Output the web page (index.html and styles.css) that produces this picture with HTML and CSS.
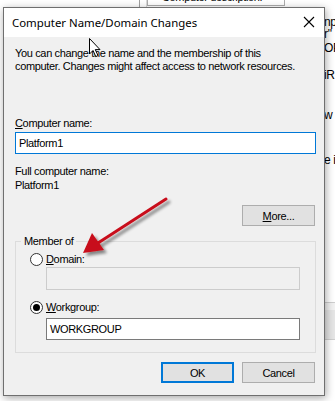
FILE: index.html
```html
<!DOCTYPE html>
<html lang="en">
<head>
  <meta charset="UTF-8" />
  <title>Computer Name/Domain Changes</title>
  <link rel="stylesheet" href="styles.css">
</head>
<body>

  <div class="behind">
    <div class="behind-top">
      <span class="rule dark"></span>
      <span class="rule"></span>
      <div class="desc-box">Computer description:</div>
    </div>
    <div class="behind-strip">
      <span class="frag f1">npl</span>
      <span class="frag f2">r"</span>
      <span class="frag f3">OP</span>
      <span class="frag f4">iR</span>
      <span class="frag f5">w</span>
      <span class="frag f6">e it</span>
      <span class="band"></span>
    </div>
  </div>

  <div class="dialog">
    <div class="titlebar">
      <span class="title">Computer Name/Domain Changes</span>
      <svg class="close" width="12" height="12" viewBox="0 0 12 12">
        <path d="M1 1 L11 11 M11 1 L1 11" stroke="#000" stroke-width="1.1" fill="none" />
      </svg>
    </div>

    <div class="content">
      <p class="intro">You can change the name and the membership of this<br>computer. Changes might affect access to network resources.</p>

      <div class="label"><u>C</u>omputer name:</div>
      <div class="textbox focused">Platform1</div>

      <div class="label full">Full computer name:</div>
      <div class="value">Platform1</div>

      <div class="more-row">
        <button class="btn"><u>M</u>ore...</button>
      </div>

      <fieldset class="group">
        <legend>Member of</legend>
        <div class="radio-row">
          <span class="radio"></span>
          <span><u>D</u>omain:</span>
        </div>
        <div class="textbox disabled"></div>
        <div class="radio-row second">
          <span class="radio checked"></span>
          <span><u>W</u>orkgroup:</span>
        </div>
        <div class="textbox">WORKGROUP</div>
      </fieldset>

      <div class="actions">
        <button class="btn default">OK</button>
        <button class="btn">Cancel</button>
      </div>
    </div>
  </div>

  <!-- annotation drawn over the screenshot -->
  <svg class="arrow" width="335" height="401" viewBox="0 0 335 401">
    <defs>
      <filter id="shade" x="-20%" y="-20%" width="140%" height="140%">
        <feGaussianBlur in="SourceAlpha" stdDeviation="1.6" />
        <feOffset dx="3" dy="3" result="blur" />
        <feComponentTransfer><feFuncA type="linear" slope="0.45" /></feComponentTransfer>
        <feMerge><feMergeNode /><feMergeNode in="SourceGraphic" /></feMerge>
      </filter>
    </defs>
    <g filter="url(#shade)">
      <line x1="166" y1="199" x2="98" y2="243" stroke="#c8101a" stroke-width="3" stroke-linecap="round" />
      <polygon points="83,253 92,233 104,250" fill="#c8101a" />
    </g>
  </svg>

  <svg class="cursor" width="13" height="20" viewBox="0 0 13 20">
    <path d="M0.5 0.5 L0.5 16 L4 12.5 L6.8 18.6 L9 17.6 L6.3 11.6 L11 11.6 Z" fill="#fff" stroke="#000" stroke-width="1" stroke-linejoin="round" />
  </svg>

</body>
</html>
```

FILE: styles.css
```css
body {
  margin: 0;
  width: 335px;
  height: 401px;
  overflow: hidden;
  position: relative;
  background: #fff;
  font-family: "Liberation Sans", Arial, sans-serif;
  font-size: 11px;
  letter-spacing: -0.35px;
  color: #000;
}
.behind {
  position: absolute;
  inset: 0;
  background: #fff;
}
.behind-top {
  position: relative;
  height: 7px;
}
.rule {
  position: absolute;
  top: 0;
  left: 146px;
  width: 1px;
  height: 7px;
  background: #dadada;
}
.rule.dark {
  left: 139px;
  background: #a0a0a0;
}
.desc-box {
  position: absolute;
  left: 147px;
  top: -9px;
  width: 138px;
  height: 15px;
  border: 1px solid #adadad;
  border-top: none;
  padding-left: 14px;
  box-sizing: border-box;
  line-height: 12px;
  white-space: nowrap;
  overflow: hidden;
}
.behind-strip {
  position: absolute;
  left: 325px;
  top: 0;
  width: 10px;
  height: 401px;
  overflow: hidden;
  font-size: 12px;
}
.frag {
  position: absolute;
  left: -1px;
  white-space: nowrap;
  line-height: 11px;
}
.f1 { top: 17px; }
.f2 { top: 29px; }
.f3 { top: 43px; }
.f4 { top: 70px; }
.f5 { top: 110px; }
.f6 { top: 155px; }
.band {
  position: absolute;
  left: 0;
  top: 302px;
  width: 10px;
  height: 38px;
  border-top: 1px solid #cfcfcf;
  border-bottom: 1px solid #cfcfcf;
  background: linear-gradient(#f2f2f2 0 7px, #e6e6e6 7px);
  box-sizing: border-box;
}

.dialog {
  position: absolute;
  left: 3px;
  top: 7px;
  width: 322px;
  height: 389px;
  box-sizing: border-box;
  border: 1px solid #6f6f6f;
  background: #f0f0f0;
  box-shadow: 1px 2px 8px rgba(0, 0, 0, 0.35);
}
.titlebar {
  height: 29px;
  background: #fff;
  display: flex;
  align-items: center;
  justify-content: space-between;
  padding: 0 9px 0 8px;
}
.title {
  font-family: "Noto Sans", sans-serif;
  font-size: 11.4px;
  letter-spacing: 0;
  margin-top: -1px;
}
.close {
  margin-top: -2px;
}
.content {
  padding: 0 9px 0 11px;
}
.intro {
  margin: 10px 0 0;
  line-height: 13px;
}
.label {
  margin-top: 44px;
  line-height: 13px;
}
.textbox {
  height: 22px;
  box-sizing: border-box;
  border: 1px solid #7a7a7a;
  background: #fff;
  padding: 0 3px;
  line-height: 20px;
  margin-top: 2px;
  margin-right: -1px;
}
.textbox.focused {
  border-color: #0078d7;
}
.label.full {
  margin-top: 11px;
}
.value {
  line-height: 13px;
  margin-top: 1px;
}
.more-row {
  display: flex;
  justify-content: flex-end;
  margin-top: 13px;
}
.btn {
  width: 73px;
  height: 21px;
  box-sizing: border-box;
  background: #e1e1e1;
  border: 1px solid #adadad;
  font-family: inherit;
  font-size: 11px;
  letter-spacing: -0.35px;
  color: #000;
  padding: 0;
  line-height: 18px;
}
.btn.default {
  border: 2px solid #0078d7;
}
.group {
  margin: 9px -1px 0 0;
  padding: 5px 0 12px 14px;
  border: 1px solid #dcdcdc;
  min-width: 0;
}
.group legend {
  margin-left: -9px;
  padding: 0 3px;
  line-height: 13px;
}
.radio-row {
  display: flex;
  align-items: center;
  gap: 3px;
  height: 13px;
  line-height: 13px;
}
.radio-row.second {
  margin-top: 11px;
}
.radio {
  width: 13px;
  height: 13px;
  box-sizing: border-box;
  border: 1px solid #333;
  border-radius: 50%;
  background: #fff;
  display: flex;
  align-items: center;
  justify-content: center;
}
.radio.checked::after {
  content: "";
  width: 7px;
  height: 7px;
  border-radius: 50%;
  background: #000;
}
.group .textbox {
  width: 254px;
  margin-left: 16px;
  margin-top: 1px;
}
.group .textbox.disabled {
  height: 23px;
  background: #f0f0f0;
  border-color: #cccccc;
}
.radio-row.second + .textbox {
  margin-top: 4px;
}
.actions {
  display: flex;
  justify-content: flex-end;
  gap: 8px;
  margin-top: 9px;
}
.arrow {
  position: absolute;
  left: 0;
  top: 0;
  pointer-events: none;
}
.cursor {
  position: absolute;
  left: 89px;
  top: 38px;
}
```
